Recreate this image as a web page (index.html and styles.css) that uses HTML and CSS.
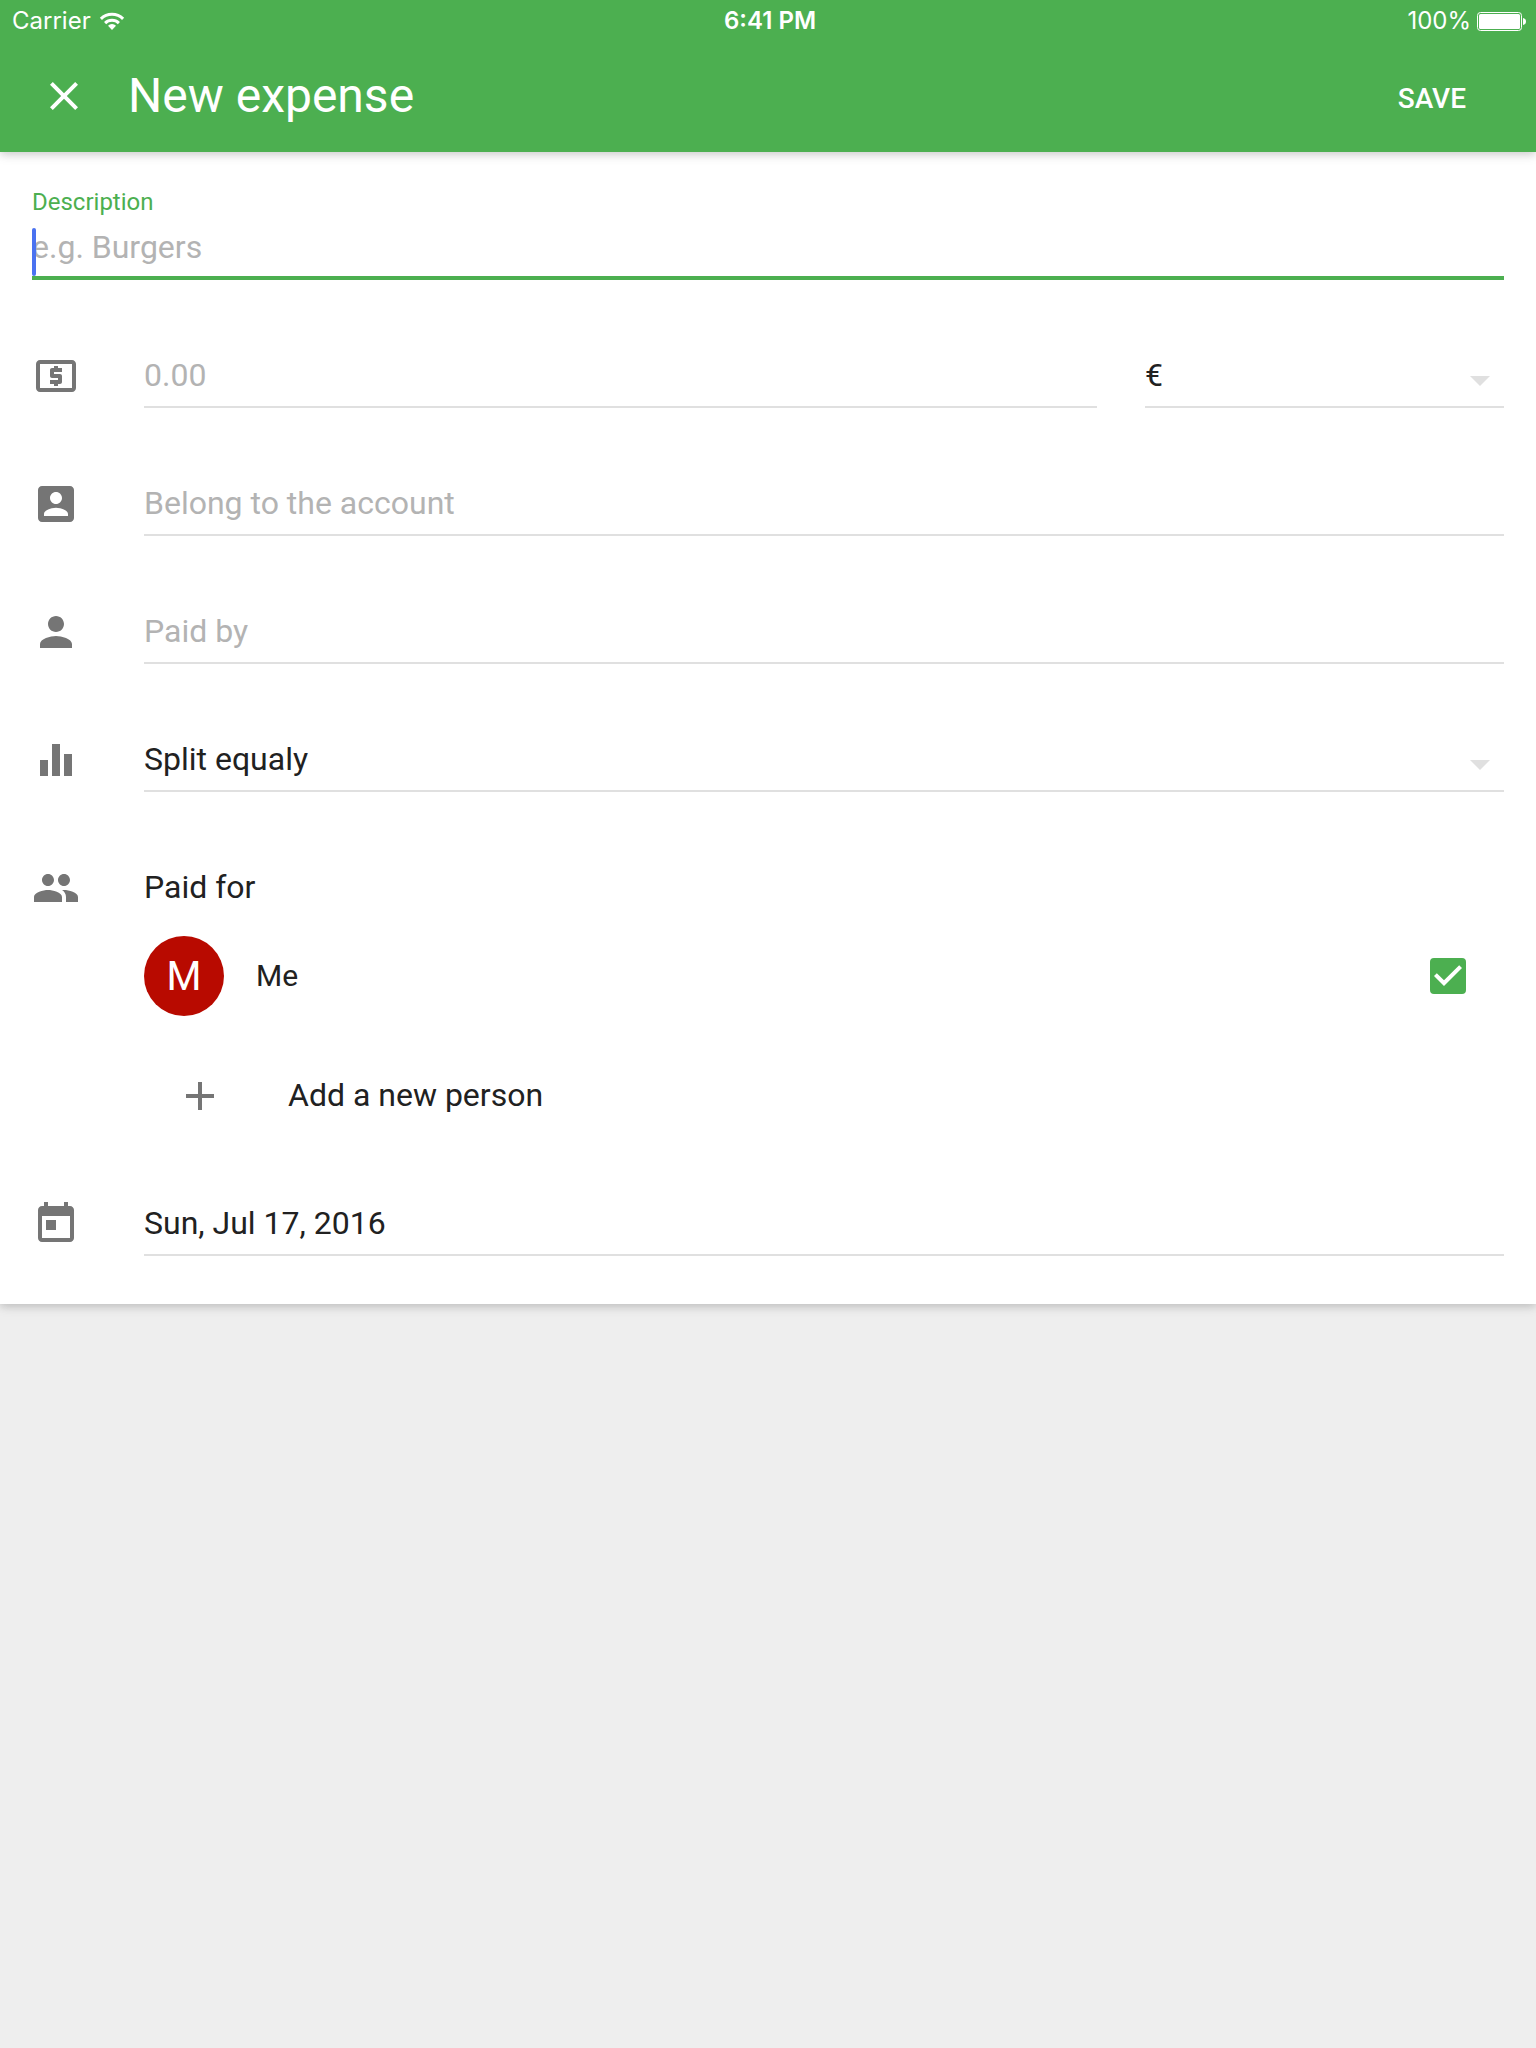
FILE: index.html
```html
<!DOCTYPE html>
<html lang="en">
<head>
<meta charset="utf-8">
<meta name="viewport" content="width=device-width, initial-scale=1">
<title>New expense</title>
<link rel="stylesheet" href="styles.css">
</head>
<body>
<header class="app-header">
  <div class="status-bar">
    <div class="status-left">
      <span>Carrier</span>
      <svg class="wifi" viewBox="0 0 26 18" aria-hidden="true">
        <path d="M1.9 6.9a15.8 15.8 0 0 1 22.2 0M6.1 11.1a9.9 9.9 0 0 1 13.8 0" fill="none" stroke="currentColor" stroke-width="3"/>
        <path d="M13 18l-4-4.2a5.6 5.6 0 0 1 8 0z" fill="currentColor"/>
      </svg>
    </div>
    <span class="status-time">6:41 PM</span>
    <div class="status-right">
      <span>100%</span>
      <svg class="battery" viewBox="0 0 49 19" aria-hidden="true">
        <rect x=".5" y=".5" width="44" height="18" rx="3" fill="none" stroke="currentColor"/>
        <rect x="2" y="2" width="41" height="15" rx="1.5" fill="currentColor"/>
        <path d="M46 6c4 .5 4 6.500 0 7z" fill="currentColor"/>
      </svg>
    </div>
  </div>
  <div class="app-bar">
    <button class="icon-button" type="button" aria-label="Close">
      <svg class="icon" viewBox="0 0 24 24"><path d="M19 6.410L17.590 5 12 10.590 6.410 5 5 6.410 10.590 12 5 17.590 6.410 19 12 13.410 17.590 19 19 17.590 13.410 12z"/></svg>
    </button>
    <h1 class="title">New expense</h1>
    <button class="save-button" type="submit" form="expense">SAVE</button>
  </div>
</header>

<main>
  <form class="card" id="expense">
    <div class="description">
      <label class="description-label" for="description">Description</label>
      <div class="description-box">
        <input class="control control-active" id="description" type="text" placeholder="e.g. Burgers">
      </div>
    </div>

    <div class="row">
      <svg class="icon" viewBox="0 0 24 24" aria-hidden="true"><path d="M11 17h2v-1h1c.55 0 1-.45 1-1v-3c0-.55-.45-1-1-1h-3v-1h4V8h-2V7h-2v1h-1c-.55 0-1 .45-1 1v3c0 .55.45 1 1 1h3v1H9v2h2v1zm9-13H4c-1.110 0-1.990.890-1.990 2L2 18c0 1.110.890 2 2 2h16c1.110 0 2-.890 2-2V6c0-1.110-.890-2-2-2zm0 14H4V6h16v12z"/></svg>
      <div class="amount">
        <input class="control" type="text" inputmode="decimal" placeholder="0.00" aria-label="Amount">
        <div class="select-box">
          <select class="control control-select" aria-label="Currency"><option>€</option></select>
          <svg class="arrow" viewBox="0 0 24 24" aria-hidden="true"><path d="M7 10l5 5 5-5z"/></svg>
        </div>
      </div>
    </div>

    <div class="row">
      <svg class="icon" viewBox="0 0 24 24" aria-hidden="true"><path d="M3 5v14c0 1.100.890 2 2 2h14c1.100 0 2-.900 2-2V5c0-1.100-.900-2-2-2H5c-1.110 0-2 .900-2 2zm12 4c0 1.660-1.340 3-3 3s-3-1.340-3-3 1.340-3 3-3 3 1.340 3 3zm-9 8c0-2 4-3.100 6-3.100s6 1.100 6 3.100v1H6v-1z"/></svg>
      <input class="control" type="text" placeholder="Belong to the account" aria-label="Account">
    </div>

    <div class="row">
      <svg class="icon" viewBox="0 0 24 24" aria-hidden="true"><path d="M12 12c2.210 0 4-1.790 4-4s-1.790-4-4-4-4 1.790-4 4 1.790 4 4 4zm0 2c-2.670 0-8 1.340-8 4v2h16v-2c0-2.660-5.330-4-8-4z"/></svg>
      <input class="control" type="text" placeholder="Paid by" aria-label="Paid by">
    </div>

    <div class="row">
      <svg class="icon" viewBox="0 0 24 24" aria-hidden="true"><path d="M10 20h4V4h-4v16zm-6 0h4v-8H4v8zM16 9v11h4V9h-4z"/></svg>
      <div class="select-box">
        <select class="control control-select" aria-label="Split"><option>Split equaly</option></select>
        <svg class="arrow" viewBox="0 0 24 24" aria-hidden="true"><path d="M7 10l5 5 5-5z"/></svg>
      </div>
    </div>

    <section class="paid-for">
      <div class="row">
        <svg class="icon" viewBox="0 0 24 24" aria-hidden="true"><path d="M16 11c1.660 0 2.990-1.340 2.990-3S17.660 5 16 5c-1.660 0-3 1.340-3 3s1.340 3 3 3zm-8 0c1.660 0 2.990-1.340 2.990-3S9.660 5 8 5C6.340 5 5 6.340 5 8s1.340 3 3 3zm0 2c-2.330 0-7 1.170-7 3.500V19h14v-2.500c0-2.330-4.670-3.500-7-3.500zm8 0c-.290 0-.620.020-.970.050 1.160.840 1.970 1.970 1.970 3.450V19h6v-2.500c0-2.330-4.670-3.500-7-3.500z"/></svg>
        <h2 class="paid-for-title">Paid for</h2>
      </div>
      <label class="person">
        <span class="avatar" aria-hidden="true">M</span>
        <span class="person-name">Me</span>
        <span class="checkbox">
          <input class="checkbox-input" type="checkbox" checked>
          <svg class="checkbox-mark" viewBox="0 0 24 24" aria-hidden="true"><path d="M10 17l-5-5 1.410-1.410L10 14.170l7.590-7.590L19 8l-9 9z"/></svg>
        </span>
      </label>
      <button class="add-person" type="button">
        <svg class="icon" viewBox="0 0 24 24" aria-hidden="true"><path d="M19 13h-6v6h-2v-6H5v-2h6V5h2v6h6v2z"/></svg>
        <span class="add-person-text">Add a new person</span>
      </button>
    </section>

    <div class="row">
      <svg class="icon" viewBox="0 0 24 24" aria-hidden="true"><path d="M19 3h-1V1h-2v2H8V1H6v2H5c-1.110 0-1.990.900-1.990 2L3 19c0 1.100.890 2 2 2h14c1.100 0 2-.900 2-2V5c0-1.100-.900-2-2-2zm0 16H5V8h14v11zM7 10h5v5H7z"/></svg>
      <input class="control" type="text" value="Sun, Jul 17, 2016" aria-label="Date">
    </div>
  </form>
</main>
</body>
</html>
```
FILE: styles.css
```css
:root {
  --green: #4caf50;
  --text: #212121;
  --hint: #b3b3b3;
  --icon: #757575;
  --line: #e0e0e0;
  --shadow: 0 2px 12px rgba(0, 0, 0, 0.12), 0 2px 8px rgba(0, 0, 0, 0.12);
}

* {
  box-sizing: border-box;
}

body {
  margin: 0;
  min-height: 100vh;
  background: #eee;
  color: var(--text);
  font: 32px/40px Roboto, sans-serif;
}

button,
input,
select {
  margin: 0;
  padding: 0;
  border: 0;
  border-radius: 0;
  outline: 0;
  background: none;
  color: inherit;
  font: inherit;
}

.icon {
  display: block;
  flex: none;
  width: 48px;
  height: 48px;
  fill: currentColor;
}

/* Header */

.app-header {
  position: relative;
  z-index: 1;
  background: var(--green);
  color: #fff;
  box-shadow: var(--shadow);
}

.status-bar {
  display: flex;
  align-items: center;
  justify-content: space-between;
  height: 40px;
  padding: 2px 10px 0 12px;
  font: 24px/38px Inter, sans-serif;
}

.status-left,
.status-right {
  display: flex;
  align-items: center;
}

.status-left {
  gap: 8px;
}

.status-right {
  gap: 6px;
}

.status-time {
  padding-left: 8px;
  font-weight: 600;
}

.wifi {
  width: 26px;
  height: 18px;
}

.battery {
  width: 49px;
  height: 19px;
}

.app-bar {
  display: flex;
  align-items: center;
  height: 112px;
  padding: 0 40px;
}

.title {
  flex: 1;
  margin: 0 0 0 40px;
  font-size: 48px;
  font-weight: 400;
  line-height: 56px;
}

.save-button {
  margin-top: 6px;
  padding: 0 30px;
  font-size: 28px;
  font-weight: 500;
  line-height: 72px;
}

/* Form */

.card {
  display: flex;
  flex-direction: column;
  gap: 32px;
  padding: 32px;
  background: #fff;
  box-shadow: var(--shadow);
}

.description {
  padding-bottom: 16px;
}

.description-label {
  display: block;
  padding-top: 2px;
  color: var(--green);
  font-size: 24px;
  line-height: 32px;
}

.description-box {
  position: relative;
}

/* Text caret of the active field */
.description-box::before {
  content: "";
  position: absolute;
  left: 0;
  bottom: 4px;
  width: 4px;
  height: 48px;
  border-radius: 2px;
  background: #4a72f0;
}

.row {
  display: flex;
  align-items: center;
  gap: 64px;
  height: 96px;
}

.row > .icon,
.add-person > .icon {
  color: var(--icon);
}

.control {
  display: block;
  flex: 1;
  width: 100%;
  min-width: 0;
  height: 64px;
  border-bottom: 2px solid var(--line);
}

.control::placeholder {
  color: var(--hint);
  opacity: 1;
}

.control-active {
  border-bottom: 4px solid var(--green);
  height: 62px;
}

.control-select {
  appearance: none;
}

.select-box {
  position: relative;
  flex: 1;
}

.arrow {
  position: absolute;
  right: 0;
  bottom: 4px;
  width: 48px;
  height: 48px;
  fill: var(--line);
  pointer-events: none;
}

.amount {
  display: grid;
  flex: 1;
  grid-template-columns: 1fr calc(30% - 49px);
  gap: 48px;
}

/* People */

.paid-for-title,
.add-person-text {
  margin: 0;
  padding-bottom: 2px;
  font-size: 32px;
  font-weight: 400;
  line-height: 40px;
}

.person {
  display: flex;
  align-items: center;
  gap: 32px;
  margin-left: 112px;
  padding-right: 32px;
}

.avatar {
  width: 80px;
  padding-top: 2px;
  border-radius: 50%;
  background: #b80a00;
  color: #fff;
  font-size: 40px;
  line-height: 78px;
  text-align: center;
}

.person-name {
  flex: 1;
  font-size: 30px;
}

.checkbox {
  display: grid;
  place-items: center;
}

.checkbox-input,
.checkbox-mark {
  grid-area: 1 / 1;
}

.checkbox-input {
  appearance: none;
  width: 36px;
  height: 36px;
  border: 4px solid var(--icon);
  border-radius: 4px;
}

.checkbox-input:checked {
  border-color: var(--green);
  background: var(--green);
}

.checkbox-mark {
  width: 48px;
  height: 48px;
  fill: #fff;
  pointer-events: none;
}

.add-person {
  display: flex;
  align-items: center;
  gap: 64px;
  width: calc(100% - 112px);
  height: 96px;
  margin: 32px 0 0 112px;
  padding: 0 32px;
  text-align: left;
}
```
